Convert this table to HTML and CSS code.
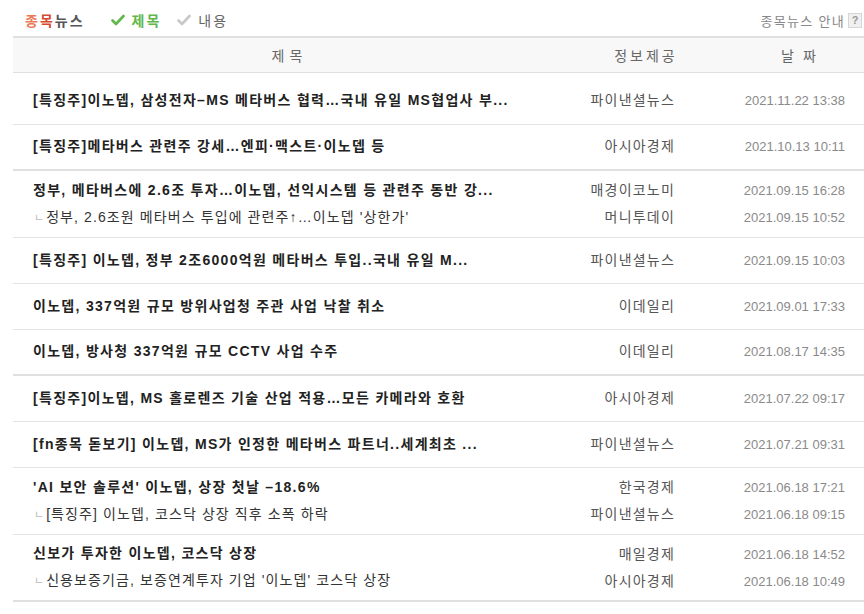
FILE: index.html
```html
<!DOCTYPE html>
<html lang="ko">
<head>
<meta charset="utf-8">
<link rel="stylesheet" href="styles.css">
</head>
<body>
<div class="wrap">
  <div class="topbar">
    <div class="tabs">
      <span class="brand"><span class="c1">종</span><span class="c2">목</span>뉴스</span>
      <span class="opt on"><svg class="chk" viewBox="0 0 14 12" width="14" height="12"><path d="M1.5 6.5 L5 10 L12.5 2" fill="none" stroke-width="2.6" stroke-linecap="round" stroke-linejoin="round"/></svg>제목</span>
      <span class="opt off"><svg class="chk" viewBox="0 0 14 12" width="14" height="12"><path d="M1.5 6.5 L5 10 L12.5 2" fill="none" stroke-width="2.6" stroke-linecap="round" stroke-linejoin="round"/></svg>내용</span>
    </div>
    <div class="guide">종목뉴스 안내 <span class="q">?</span></div>
  </div>
  <table class="news">
    <colgroup><col class="c-title"><col class="c-src"><col class="c-date"></colgroup>
    <thead>
      <tr><th class="h-title">제목</th><th class="h-src">정보제공</th><th class="h-date">날짜</th></tr>
    </thead>
    <tbody>
      <tr class="r first"><td class="t"><div class="ln b">[특징주]이노뎁, 삼성전자–MS 메타버스 협력…국내 유일 MS협업사 부...</div></td><td class="s"><div class="ln">파이낸셜뉴스</div></td><td class="d"><div class="ln">2021.11.22 13:38</div></td></tr>
      <tr class="r sep one"><td class="t"><div class="ln b">[특징주]메타버스 관련주 강세…엔피·맥스트·이노뎁 등</div></td><td class="s"><div class="ln">아시아경제</div></td><td class="d"><div class="ln">2021.10.13 10:11</div></td></tr>
      <tr class="r dbl"><td class="t"><div class="ln b">정부, 메타버스에 2.6조 투자…이노뎁, 선익시스템 등 관련주 동반 강...</div><div class="ln sub"><span class="rel">ㄴ</span>정부, 2.6조원 메타버스 투입에 관련주↑…이노뎁 '상한가'</div></td><td class="s"><div class="ln">매경이코노미</div><div class="ln">머니투데이</div></td><td class="d"><div class="ln">2021.09.15 16:28</div><div class="ln">2021.09.15 10:52</div></td></tr>
      <tr class="r"><td class="t"><div class="ln b">[특징주] 이노뎁, 정부 2조6000억원 메타버스 투입..국내 유일 M...</div></td><td class="s"><div class="ln">파이낸셜뉴스</div></td><td class="d"><div class="ln">2021.09.15 10:03</div></td></tr>
      <tr class="r"><td class="t"><div class="ln b">이노뎁, 337억원 규모 방위사업청 주관 사업 낙찰 취소</div></td><td class="s"><div class="ln">이데일리</div></td><td class="d"><div class="ln">2021.09.01 17:33</div></td></tr>
      <tr class="r sep one"><td class="t"><div class="ln b">이노뎁, 방사청 337억원 규모 CCTV 사업 수주</div></td><td class="s"><div class="ln">이데일리</div></td><td class="d"><div class="ln">2021.08.17 14:35</div></td></tr>
      <tr class="r"><td class="t"><div class="ln b">[특징주]이노뎁, MS 홀로렌즈 기술 산업 적용…모든 카메라와 호환</div></td><td class="s"><div class="ln">아시아경제</div></td><td class="d"><div class="ln">2021.07.22 09:17</div></td></tr>
      <tr class="r"><td class="t"><div class="ln b">[fn종목 돋보기] 이노뎁, MS가 인정한 메타버스 파트너..세계최초 ...</div></td><td class="s"><div class="ln">파이낸셜뉴스</div></td><td class="d"><div class="ln">2021.07.21 09:31</div></td></tr>
      <tr class="r dbl"><td class="t"><div class="ln b">'AI 보안 솔루션' 이노뎁, 상장 첫날 –18.6%</div><div class="ln sub"><span class="rel">ㄴ</span>[특징주] 이노뎁, 코스닥 상장 직후 소폭 하락</div></td><td class="s"><div class="ln">한국경제</div><div class="ln">파이낸셜뉴스</div></td><td class="d"><div class="ln">2021.06.18 17:21</div><div class="ln">2021.06.18 09:15</div></td></tr>
      <tr class="r dbl sep"><td class="t"><div class="ln b">신보가 투자한 이노뎁, 코스닥 상장</div><div class="ln sub"><span class="rel">ㄴ</span>신용보증기금, 보증연계투자 기업 '이노뎁' 코스닥 상장</div></td><td class="s"><div class="ln">매일경제</div><div class="ln">아시아경제</div></td><td class="d"><div class="ln">2021.06.18 14:52</div><div class="ln">2021.06.18 10:49</div></td></tr>
    </tbody>
  </table>
</div>
</body>
</html>
```
FILE: styles.css
```css
html, body { margin: 0; padding: 0; background: #fff; }
body {
  font-family: "Liberation Sans", "Noto Sans CJK KR", sans-serif;
  font-size: 14px;
  color: #222;
}
.wrap { padding-left: 13px; width: 851px; }
.topbar {
  height: 36px;
  display: flex;
  justify-content: space-between;
  align-items: center;
}
.tabs { display: flex; align-items: center; padding-left: 12px; margin-top: 4px; }
.brand { font-weight: bold; color: #555; font-size: 14px; margin-right: 26px; letter-spacing: 2px; }
.brand .c1 { color: #ec7a5a; }
.brand .c2 { color: #d84a2e; }
.opt { display: inline-flex; align-items: center; gap: 7px; margin-right: 16px; letter-spacing: 2px; }
.opt.on { color: #5fb84a; font-weight: bold; }
.opt.on .chk path { stroke: #5fb84a; }
.opt.off { color: #666; }
.opt.off .chk path { stroke: #c8c8c8; }
.guide { color: #888; font-size: 13px; display: flex; align-items: center; gap: 3px; margin-top: 4px; letter-spacing: 1.3px; }
.q {
  display: inline-flex; align-items: center; justify-content: center;
  width: 12px; height: 13px; margin-right: 2px;
  border: 1px solid #d6d6d6; background: #f0f0f0;
  color: #999; font-size: 11px; font-weight: bold; letter-spacing: 0;
}
.news { width: 851px; border-collapse: collapse; table-layout: fixed; }
.c-title { width: 565px; }
.c-src { width: 122px; }
.c-date { width: 164px; }
.news thead th {
  height: 34px; padding: 0;
  background: #f8f8f8;
  border-top: 2px solid #e0e0e0;
  border-bottom: 1px solid #e0e0e0;
  font-weight: normal; color: #666; font-size: 14px;
}
.h-title { text-align: center; letter-spacing: 5px; padding-right: 12px !important; }
.h-src { text-align: center; letter-spacing: 3px; padding-left: 14px !important; }
.h-date { text-align: center; letter-spacing: 9px; padding-left: 42px !important; }
.r td { border-bottom: 1px solid #e3e3e3; padding: 0; vertical-align: middle; height: 45px; }
.r.first td { height: 51px; }
.r.first .ln { padding-top: 3px; }
.r.sep td { border-bottom: 2px solid #e0e0e0; height: 44px; }
.r.one .ln { margin-top: -2px; }
.r.dbl td { height: 66px; }
.r.dbl.sep td { height: 65px; }
.ln { line-height: 27px; white-space: nowrap; }
.t { padding-left: 20px !important; }
.t .b { font-weight: bold; color: #222; letter-spacing: 1.3px; }
.t .sub { color: #333; letter-spacing: 1.1px; }
.rel { color: #bbb; font-size: 11px; margin-right: 2px; margin-left: 1px; letter-spacing: 0; }
.s { text-align: right; padding-right: 25px !important; color: #555; letter-spacing: 1.2px; }
.d { text-align: right; padding-right: 19px !important; color: #8a8a8a; font-size: 13px; }
```
